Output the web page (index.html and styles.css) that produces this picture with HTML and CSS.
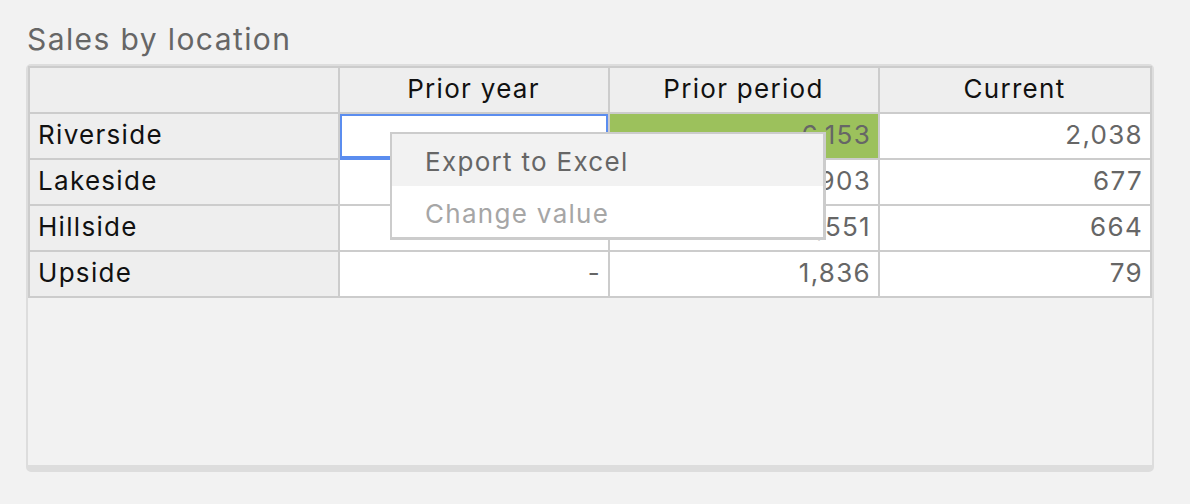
FILE: index.html
```html
<!DOCTYPE html>
<html lang="en">
<head>
<meta charset="utf-8">
<title>Sales by location</title>
<link rel="stylesheet" href="styles.css">
</head>
<body>
<div class="page">
  <h1 class="title">Sales by location</h1>
  <div class="panel">
    <div class="grid">
      <div class="cell head"></div>
      <div class="cell head center">Prior year</div>
      <div class="cell head center">Prior period</div>
      <div class="cell head center">Current</div>

      <div class="cell head label">Riverside</div>
      <div class="cell num selected"></div>
      <div class="cell num highlight">6,153</div>
      <div class="cell num">2,038</div>

      <div class="cell head label">Lakeside</div>
      <div class="cell num"></div>
      <div class="cell num">1,903</div>
      <div class="cell num">677</div>

      <div class="cell head label">Hillside</div>
      <div class="cell num"></div>
      <div class="cell num">1,551</div>
      <div class="cell num">664</div>

      <div class="cell head label">Upside</div>
      <div class="cell num">-</div>
      <div class="cell num">1,836</div>
      <div class="cell num">79</div>
    </div>

    <ul class="menu">
      <li class="menu-item active">Export to Excel</li>
      <li class="menu-item disabled">Change value</li>
    </ul>
  </div>
</div>
</body>
</html>
```

FILE: styles.css
```css
html, body {
  margin: 0;
  background: #f2f2f2;
}

body {
  font-family: Inter, "Liberation Sans", sans-serif;
  color: #111;
}

.page {
  padding-left: 26px;
  width: 1128px;
}

.title {
  margin: 0 0 7px 1px;
  padding-top: 21px;
  font-size: 30px;
  line-height: 36px;
  font-weight: 400;
  letter-spacing: 1.4px;
  color: #666;
}

.panel {
  position: relative;
  box-sizing: border-box;
  width: 1128px;
  height: 408px;
  border: 2px solid #dddddd;
  border-bottom-width: 7px;
  border-radius: 5px;
  background: #f2f2f2;
}

.grid {
  display: grid;
  grid-template-columns: 310px 270px 270px 272px;
  grid-auto-rows: 46px;
  width: max-content;
  border-left: 2px solid #cccccc;
  border-top: 2px solid #cccccc;
}

.cell {
  box-sizing: border-box;
  display: flex;
  align-items: center;
  padding: 0 9px 3px 8px;
  border-right: 2px solid #cccccc;
  border-bottom: 2px solid #cccccc;
  background: #ffffff;
  font-size: 26px;
  line-height: 30px;
  letter-spacing: 1.3px;
  white-space: nowrap;
}

.head {
  background: #eeeeee;
  color: #111;
}

.center {
  justify-content: center;
}

.num {
  justify-content: flex-end;
  padding-right: 7px;
  color: #666;
}

.selected {
  box-shadow: inset 0 0 0 2px #5b8def;
  border-bottom-color: #5b8def;
}

.highlight {
  background: #9cc15c;
}

.menu {
  position: absolute;
  left: 362px;
  top: 66px;
  box-sizing: border-box;
  width: 436px;
  margin: 0;
  padding: 0;
  list-style: none;
  background: #ffffff;
  border: 2px solid #cccccc;
  border-right-width: 3px;
  border-bottom-width: 3px;
}

.menu-item {
  padding: 3px 0 0 33px;
  font-size: 26px;
  line-height: 49px;
  letter-spacing: 1.3px;
  white-space: nowrap;
}

.menu-item.active {
  background: #f2f2f2;
  color: #666;
}

.menu-item.disabled {
  padding-top: 4px;
  line-height: 47px;
  color: #a6a6a6;
}
```
